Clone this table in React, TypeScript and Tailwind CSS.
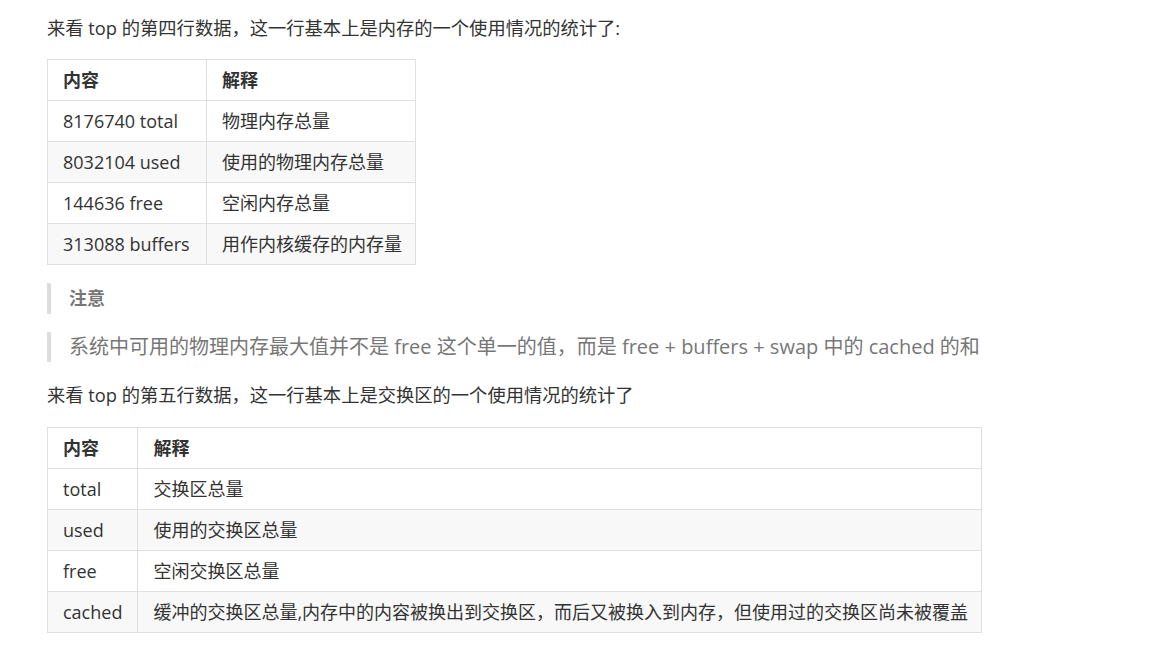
import React from "react";

const font = { fontFamily: '"Open Sans", "Noto Sans CJK SC", sans-serif' };

function Table({ rows, w1, w2 }: { rows: [string, string][]; w1: string; w2: string }) {
  return (
    <table className="border-collapse text-[18px] text-[#333]">
      <thead>
        <tr className="bg-white">
          <th className={`${w1} h-[41px] border border-[#dfdfdf] px-[15px] text-left font-bold`}>内容</th>
          <th className={`${w2} h-[41px] border border-[#dfdfdf] pl-[15px] pr-[13px] text-left font-bold`}>解释</th>
        </tr>
      </thead>
      <tbody>
        {rows.map((r, i) => (
          <tr key={i} className={i % 2 === 1 ? "bg-[#f8f8f8]" : "bg-white"}>
            <td className="h-[41px] border border-[#dfdfdf] px-[15px] whitespace-nowrap">{r[0]}</td>
            <td className="h-[41px] border border-[#dfdfdf] pl-[15px] pr-[13px] whitespace-nowrap">{r[1]}</td>
          </tr>
        ))}
      </tbody>
    </table>
  );
}

export default function App() {
  return (
    <div className="min-h-[645px] bg-white pl-[47px] pt-[13px]" style={font}>
      <p className="text-[18.3px] leading-[30px] text-[#333]">来看 top 的第四行数据，这一行基本上是内存的一个使用情况的统计了:</p>
      <div className="mt-[16px]">
        <Table
          w1="w-[159px]"
          w2="w-[207px]"
          rows={[
            ["8176740 total", "物理内存总量"],
            ["8032104 used", "使用的物理内存总量"],
            ["144636 free", "空闲内存总量"],
            ["313088 buffers", "用作内核缓存的内存量"],
          ]}
        />
      </div>
      <div className="mt-[18px] flex h-[31px] items-center border-l-4 border-[#dddddd] pl-[18px]">
        <span className="text-[18px] font-bold text-[#777]">注意</span>
      </div>
      <div className="mt-[18px] flex h-[30px] items-center border-l-4 border-[#dddddd] pl-[18px]">
        <span className="text-[20px] text-[#777]">系统中可用的物理内存最大值并不是 free 这个单一的值，而是 free + buffers + swap 中的 cached 的和</span>
      </div>
      <p className="mt-[18px] text-[18.3px] leading-[30px] text-[#333]">来看 top 的第五行数据，这一行基本上是交换区的一个使用情况的统计了</p>
      <div className="mt-[17px]">
        <Table
          w1="w-[90px]"
          w2="w-[842px]"
          rows={[
            ["total", "交换区总量"],
            ["used", "使用的交换区总量"],
            ["free", "空闲交换区总量"],
            ["cached", "缓冲的交换区总量,内存中的内容被换出到交换区，而后又被换入到内存，但使用过的交换区尚未被覆盖"],
          ]}
        />
      </div>
    </div>
  );
}
